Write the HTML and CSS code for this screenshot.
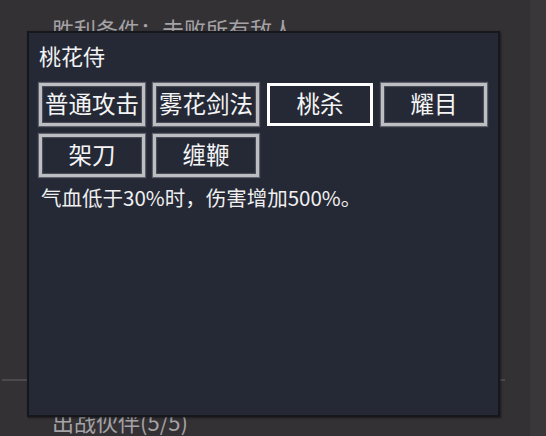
FILE: index.html
```html
<!DOCTYPE html>
<html lang="zh-CN">
<head>
<meta charset="utf-8">
<link rel="stylesheet" href="styles.css">
</head>
<body>
<div class="screen">
  <div class="backdrop">
    <div class="bg-line-text top-text">胜利条件：击败所有敌人</div>
    <div class="spacer"></div>
    <div class="divider"></div>
    <div class="bg-line-text bottom-text">出战伙伴(5/5)</div>
  </div>
  <div class="side-strip"></div>
  <div class="modal">
    <div class="modal-title">桃花侍</div>
    <div class="skills">
      <div class="skill">普通攻击</div>
      <div class="skill">雾花剑法</div>
      <div class="skill selected">桃杀</div>
      <div class="skill">耀目</div>
      <div class="skill">架刀</div>
      <div class="skill">缠鞭</div>
    </div>
    <div class="desc">气血低于30%时，伤害增加500%。</div>
  </div>
</div>
</body>
</html>
```
FILE: styles.css
```css
html, body {
  margin: 0;
  padding: 0;
  width: 546px;
  height: 436px;
  overflow: hidden;
  background: #343135;
  font-family: "Noto Sans CJK SC", "Noto Sans", sans-serif;
}
.screen {
  position: relative;
  width: 546px;
  height: 436px;
  overflow: hidden;
}
.backdrop {
  display: flex;
  flex-direction: column;
  height: 436px;
}
.side-strip {
  position: absolute;
  right: 0;
  top: 0;
  width: 16px;
  height: 436px;
  background: #3a373b;
}
.bg-line-text {
  color: #a4a3a6;
  font-size: 22px;
  line-height: 30px;
  padding-left: 52px;
}
.top-text {
  margin-top: 13px;
}
.spacer {
  flex: 1;
}
.divider {
  height: 2px;
  background: #4c4a4e;
  margin: 0 41px 0 2px;
}
.bottom-text {
  margin-top: 25px;
}
.modal {
  position: absolute;
  left: 27px;
  top: 31px;
  width: 473px;
  height: 386px;
  box-sizing: border-box;
  background: #252936;
  border: 2px solid #16171d;
  box-shadow: 1px 1px 2px rgba(0,0,0,0.5);
  padding: 0 0 0 10px;
}
.modal-title {
  color: #f2f2f2;
  font-size: 22px;
  line-height: 28px;
  margin-top: 8px;
}
.skills {
  display: grid;
  grid-template-columns: repeat(4, 106px);
  grid-auto-rows: 43px;
  column-gap: 8px;
  row-gap: 8px;
  margin-top: 14px;
}
.skill {
  box-sizing: border-box;
  border: 3px solid #bdbec1;
  box-shadow: 0 0 1px 1px rgba(200,200,205,0.35), inset 0 0 1px 1px rgba(200,200,205,0.25);
  color: #f4f4f4;
  font-size: 23.5px;
  display: flex;
  align-items: center;
  justify-content: center;
  line-height: 1;
  padding-bottom: 1px;
}
.skill.selected {
  border-color: #ffffff;
  box-shadow: none;
}
.desc {
  color: #f0f0f0;
  font-size: 20.5px;
  line-height: 28px;
  margin-top: 6px;
  padding-left: 2px;
}
```
